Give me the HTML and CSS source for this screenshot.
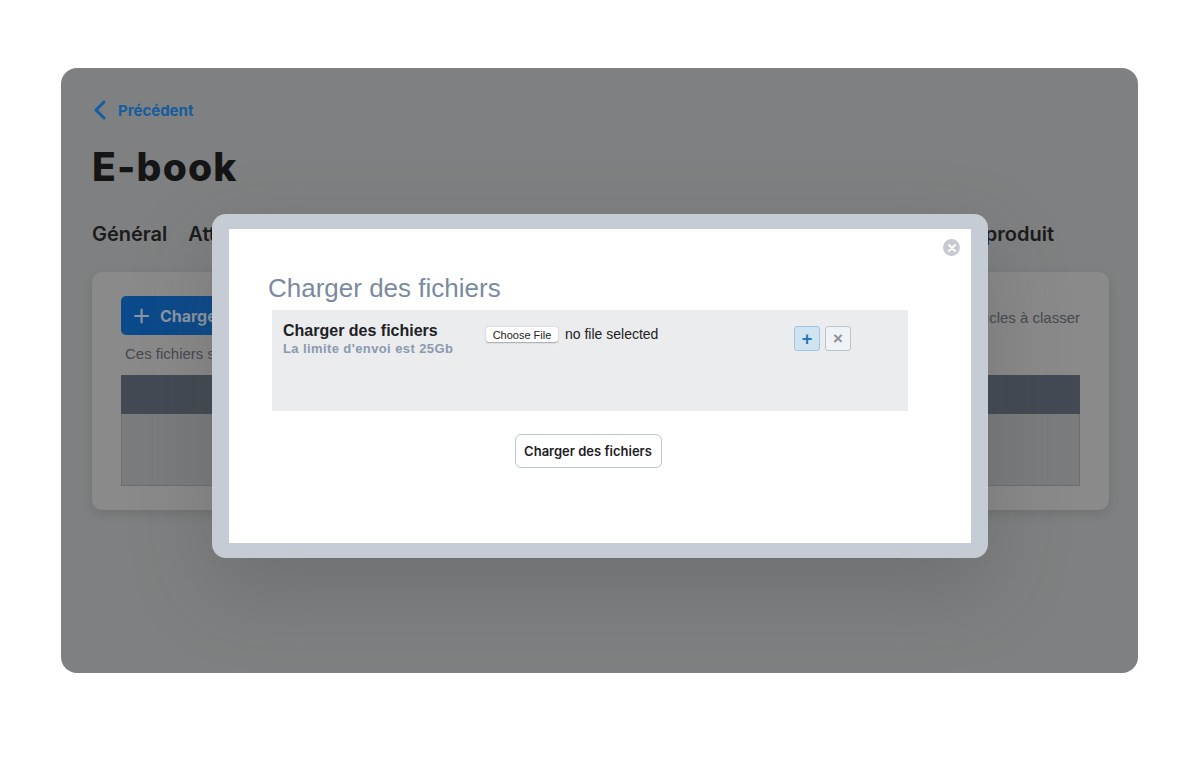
FILE: index.html
```html
<!DOCTYPE html>
<html>
<head>
    <meta charset="UTF-8">
    <link rel="stylesheet" href="styles.css">
</head>
<body>
<div class="screen">
    <a class="back" href="#">
        <svg width="14" height="20" viewBox="0 0 14 20"><path d="M11 2 L3 10 L11 18" fill="none" stroke="currentColor" stroke-width="3" stroke-linecap="round" stroke-linejoin="round"/></svg>
        Précédent
    </a>
    <h1 class="title">E-book</h1>

    <div class="tabs">
        <span>Général</span>
        <span>Attributs</span>
        <span>Fichiers</span>
        <span>Tarifs</span>
        <span class="last">Page produit</span>
    </div>

    <div class="card">
        <div class="card-top">
            <button class="upload-btn"><span class="plus">+</span> Charger des fichiers</button>
            <span class="hint">Glissez les articles à classer</span>
        </div>
        <p class="note">Ces fichiers sont privés</p>
        <div class="table">
            <div class="table-head"></div>
            <div class="table-body"></div>
        </div>
    </div>

    <!-- modal -->
    <div class="modal">
        <div class="modal-inner">
            <span class="close">
                <svg width="8" height="8" viewBox="0 0 8 8"><path d="M1 1 L7 7 M7 1 L1 7" stroke="#fff" stroke-width="1.8" stroke-linecap="round"/></svg>
            </span>
            <h2 class="modal-title">Charger des fichiers</h2>
            <div class="panel">
                <div class="label">
                    <strong>Charger des fichiers</strong>
                    <small>La limite d'envoi est 25Gb</small>
                </div>
                <div class="file">
                    <button class="file-btn">Choose File</button>
                    <span>no file selected</span>
                </div>
                <div class="actions">
                    <button class="add">+</button>
                    <button class="remove">×</button>
                </div>
            </div>
            <div class="submit-row">
                <button class="submit">Charger des fichiers</button>
            </div>
        </div>
    </div>
</div>
</body>
</html>
```

FILE: styles.css
```css
* {
    box-sizing: border-box;
}

body {
    margin: 0;
    background: #fff;
    font-family: Inter, "Liberation Sans", sans-serif;
}

.screen {
    position: relative;
    margin: 68px 62px 0 61px;
    height: 605px;
    background: #7f8081;
    border-radius: 16px;
    padding: 32px 29px 0 31px;
    overflow: hidden;
}

.back {
    display: flex;
    align-items: center;
    gap: 11px;
    height: 20px;
    color: #145d9e;
    text-decoration: none;
    font-weight: 700;
    font-size: 15px;
    padding-left: 1px;
}

.title {
    margin: 24px 0 0;
    font-size: 39px;
    line-height: 46px;
    font-weight: 800;
    color: #151515;
    letter-spacing: 1.2px;
}

.tabs {
    display: flex;
    gap: 21px;
    width: 962px;
    margin-top: 32px;
    font-size: 20px;
    font-weight: 600;
    color: #1b1b1b;
    line-height: 24px;
}

.tabs .last {
    margin-left: auto;
}

.card {
    margin-top: 26px;
    height: 238px;
    background: #8a8a8a;
    border-radius: 10px;
    padding: 24px 29px 0;
    box-shadow: 0 4px 12px rgba(0, 0, 0, 0.12);
}

.card-top {
    display: flex;
    justify-content: space-between;
    align-items: center;
}

.upload-btn {
    height: 39px;
    width: 220px;
    border: none;
    border-radius: 5px;
    background: #0b4a8b;
    color: #8d97a3;
    font-family: inherit;
    font-weight: 700;
    font-size: 16px;
    white-space: nowrap;
    padding: 0 10px;
    display: flex;
    align-items: center;
    gap: 8px;
}

.upload-btn .plus {
    font-size: 32px;
    font-weight: 300;
    color: #8d97a3;
    line-height: 1;
    margin-top: -3px;
}

.hint {
    font-family: "Liberation Sans", sans-serif;
    font-size: 15px;
    color: #46494e;
    padding-top: 4px;
}

.note {
    margin: 10px 0 13px 4px;
    font-family: "Liberation Sans", sans-serif;
    font-size: 15px;
    color: #46494e;
}

.table-head {
    height: 39px;
    background: #434a53;
}

.table-body {
    height: 72px;
    background: #7b7c7d;
    border: 1px solid #6c6e72;
    border-top: none;
}

/* modal */
.modal {
    position: absolute;
    left: 151px;
    top: 146px;
    width: 776px;
    height: 344px;
    background: #c5ccd4;
    border-radius: 14px;
    padding: 15px 17px;
    box-shadow: 0 30px 80px rgba(60, 60, 60, 0.25);
}

.modal-inner {
    position: relative;
    height: 314px;
    background: #fff;
    padding: 0 63px 0 43px;
    font-family: "Liberation Sans", sans-serif;
}

.close {
    position: absolute;
    right: 11px;
    top: 10px;
    width: 17px;
    height: 17px;
    border-radius: 50%;
    background: #c6cacf;
    display: flex;
    align-items: center;
    justify-content: center;
}

.modal-title {
    margin: 0 0 0 -4px;
    padding-top: 43px;
    font-size: 26px;
    line-height: 32px;
    font-weight: 400;
    color: #7a8ba0;
}

.panel {
    margin-top: 6px;
    height: 101px;
    background: #ebecee;
    display: flex;
    align-items: flex-start;
    padding: 11px 0 0 11px;
}

.label {
    width: 203px;
    display: flex;
    flex-direction: column;
}

.label strong {
    font-size: 16px;
    line-height: 19px;
    color: #202124;
}

.label small {
    font-size: 13px;
    font-weight: 700;
    letter-spacing: 0.4px;
    color: #8a9aae;
    line-height: 17px;
}

.file {
    width: 308px;
    display: flex;
    align-items: center;
    gap: 7px;
    font-size: 14px;
    color: #222;
    padding-top: 4px;
}

.file-btn {
    height: 15px;
    width: 72px;
    padding: 0;
    border: none;
    border-radius: 3px;
    background: #fff;
    box-shadow: 0 0.5px 1.5px rgba(0, 0, 0, 0.3);
    font-family: "Liberation Sans", sans-serif;
    font-size: 11px;
    color: #222;
    margin-top: 2px;
}

.actions {
    display: flex;
    gap: 5px;
    padding-top: 5px;
}

.actions button {
    width: 26px;
    height: 25px;
    border-radius: 3px;
    padding: 0;
    font-family: "Liberation Sans", sans-serif;
    font-weight: 700;
    line-height: 1;
}

.add {
    background: #d0e3f1;
    border: 1px solid #9fc5e0;
    color: #2676b0;
    font-size: 18px;
}

.remove {
    background: #eff3f6;
    border: 1px solid #b9c4cc;
    color: #8c8f93;
    font-size: 17px;
}

.submit-row {
    width: 636px;
    display: flex;
    justify-content: center;
    margin-top: 23px;
    padding-right: 4px;
}

.submit {
    height: 34px;
    width: 147px;
    background: #fff;
    border: 1px solid #bfc5cc;
    border-radius: 6px;
    font-family: Inter, sans-serif;
    font-weight: 600;
    font-size: 13px;
    color: #1d1d1f;
}
```
